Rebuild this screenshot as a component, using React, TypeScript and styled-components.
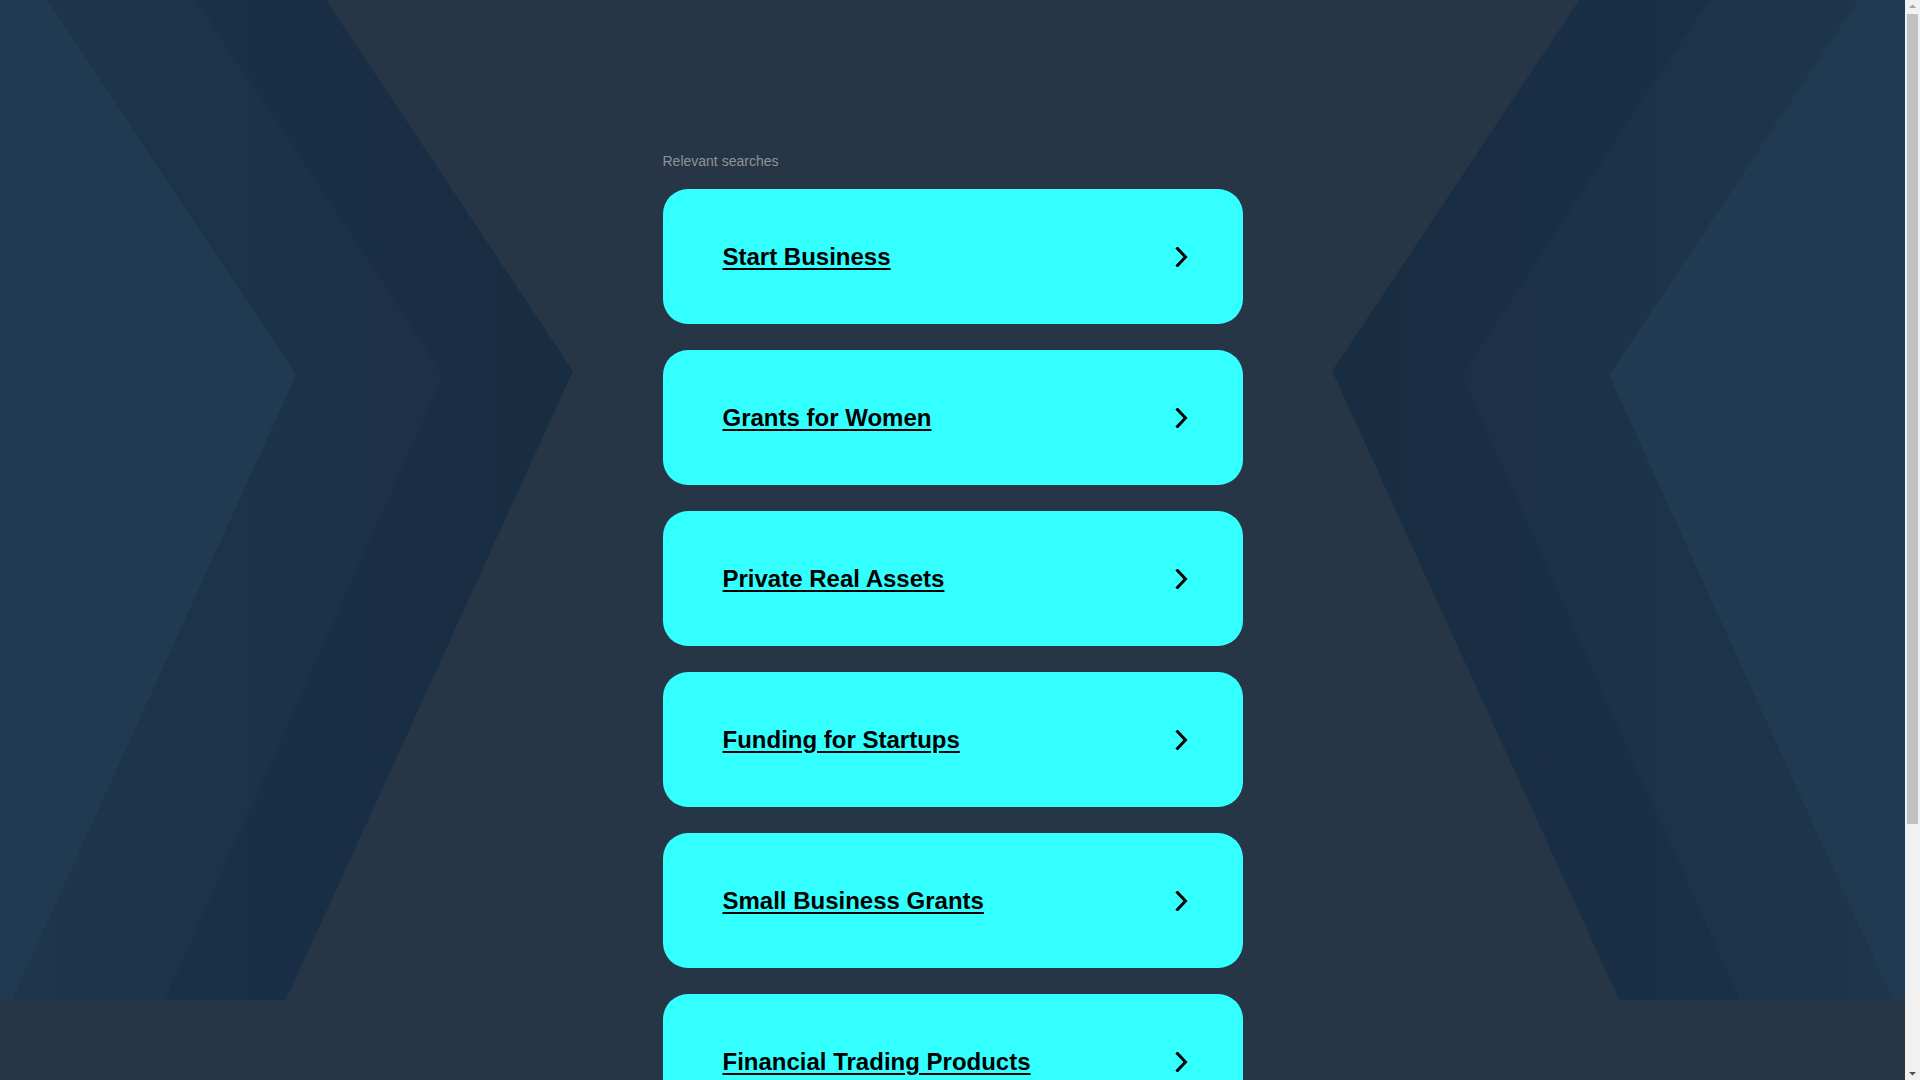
import React from "react";
import styled, { createGlobalStyle } from "styled-components";

const GlobalStyle = createGlobalStyle`
  html, body {
    margin: 0;
    padding: 0;
    background: #263646;
  }
  body {
    font-family: "Liberation Sans", Arial, sans-serif;
  }
`;

const Page = styled.div`
  position: relative;
  width: calc(100% - 15px);
  min-height: 100vh;
  background: #263646;
`;

const Backdrop = styled.svg`
  position: absolute;
  top: 0;
  left: 0;
  width: 100%;
  height: 1000px;
  z-index: 0;
  pointer-events: none;
`;

const Content = styled.main`
  position: relative;
  z-index: 1;
  width: 580px;
  margin: 0 auto;
  padding: 153px 0 270px;
  display: flex;
  flex-direction: column;
`;

const Label = styled.div`
  font-size: 14px;
  line-height: 16px;
  color: #8f9499;
  margin-bottom: 20px;
`;

const List = styled.ul`
  list-style: none;
  margin: 0;
  padding: 0;
  display: flex;
  flex-direction: column;
  gap: 26px;
`;

const Card = styled.a`
  box-sizing: border-box;
  height: 135px;
  border-radius: 25px;
  background: #33ffff;
  display: flex;
  align-items: center;
  justify-content: space-between;
  padding: 0 54px 0 60px;
  text-decoration: none;
  color: #000;
  cursor: pointer;
`;

const Title = styled.span`
  font-size: 24px;
  font-weight: 700;
  color: #000;
  text-decoration: underline;
  text-decoration-thickness: 2px;
  text-underline-offset: 3px;
`;

const Chevron = styled.svg`
  width: 14px;
  height: 20px;
  flex: none;
`;

const ScrollRail = styled.div`
  position: fixed;
  top: 0;
  right: 0;
  width: 15px;
  height: 100vh;
  background: #f1f1f1;
  z-index: 10;
  display: flex;
  flex-direction: column;
  align-items: center;
`;

const ScrollArrow = styled.svg`
  width: 15px;
  height: 14px;
  flex: none;
`;

const ScrollThumb = styled.div`
  width: 11px;
  height: 810px;
  background: #c1c1c1;
  flex: none;
`;

const ScrollSpacer = styled.div`
  flex: 1;
`;

const items = [
  "Start Business",
  "Grants for Women",
  "Private Real Assets",
  "Funding for Startups",
  "Small Business Grants",
  "Financial Trading Products",
];

type Pt = [number, number];
const W = 1905;
const toPoints = (pts: Pt[]) => pts.map(([x, y]) => `${x},${y}`).join(" ");
const mirror = (pts: Pt[]): Pt[] => pts.map(([x, y]) => [W - x, y] as Pt);

const dark: Pt[] = [[0, 0], [326, 0], [573, 371], [286, 1000], [0, 1000]];
const mid: Pt[] = [[0, 0], [196, 0], [443, 375], [165, 1000], [0, 1000]];
const light: Pt[] = [[0, 0], [47, 0], [296, 375], [12, 1000], [0, 1000]];

const Background: React.FC = () => (
  <Backdrop viewBox="0 0 1905 1000" preserveAspectRatio="none" aria-hidden>
    <defs>
      <linearGradient id="gDarkL" x1="0" y1="0" x2="573" y2="0" gradientUnits="userSpaceOnUse">
        <stop offset="0" stopColor="#1b3148" />
        <stop offset="1" stopColor="#182d42" />
      </linearGradient>
      <linearGradient id="gMidL" x1="0" y1="0" x2="443" y2="0" gradientUnits="userSpaceOnUse">
        <stop offset="0" stopColor="#1e354c" />
        <stop offset="1" stopColor="#1c3148" />
      </linearGradient>
      <linearGradient id="gDarkR" x1={W} y1="0" x2={W - 573} y2="0" gradientUnits="userSpaceOnUse">
        <stop offset="0" stopColor="#1b3148" />
        <stop offset="1" stopColor="#182d42" />
      </linearGradient>
      <linearGradient id="gMidR" x1={W} y1="0" x2={W - 443} y2="0" gradientUnits="userSpaceOnUse">
        <stop offset="0" stopColor="#1e354c" />
        <stop offset="1" stopColor="#1c3148" />
      </linearGradient>
    </defs>
    <polygon points={toPoints(dark)} fill="url(#gDarkL)" />
    <polygon points={toPoints(mid)} fill="url(#gMidL)" />
    <polygon points={toPoints(light)} fill="#203a51" />
    <polygon points={toPoints(mirror(dark))} fill="url(#gDarkR)" />
    <polygon points={toPoints(mirror(mid))} fill="url(#gMidR)" />
    <polygon points={toPoints(mirror(light))} fill="#203a51" />
  </Backdrop>
);

const Arrow: React.FC = () => (
  <Chevron viewBox="0 0 14 20" aria-hidden>
    <path d="M2.5 1.5 L10.5 10 L2.5 18.5" fill="none" stroke="#000" strokeWidth="3" strokeLinecap="square" strokeLinejoin="miter" />
  </Chevron>
);

const Scrollbar: React.FC = () => (
  <ScrollRail aria-hidden>
    <ScrollArrow viewBox="0 0 15 14">
      <polygon points="4,8 11,8 7.5,4.5" fill="#a3a3a3" />
    </ScrollArrow>
    <ScrollThumb />
    <ScrollSpacer />
    <ScrollArrow viewBox="0 0 15 14">
      <polygon points="4,6 11,6 7.5,9.5" fill="#505050" />
    </ScrollArrow>
  </ScrollRail>
);

export default function App() {
  return (
    <>
      <GlobalStyle />
      <Page>
        <Background />
        <Content>
          <Label>Relevant searches</Label>
          <List>
            {items.map((t) => (
              <li key={t}>
                <Card href="#">
                  <Title>{t}</Title>
                  <Arrow />
                </Card>
              </li>
            ))}
          </List>
        </Content>
      </Page>
      <Scrollbar />
    </>
  );
}
